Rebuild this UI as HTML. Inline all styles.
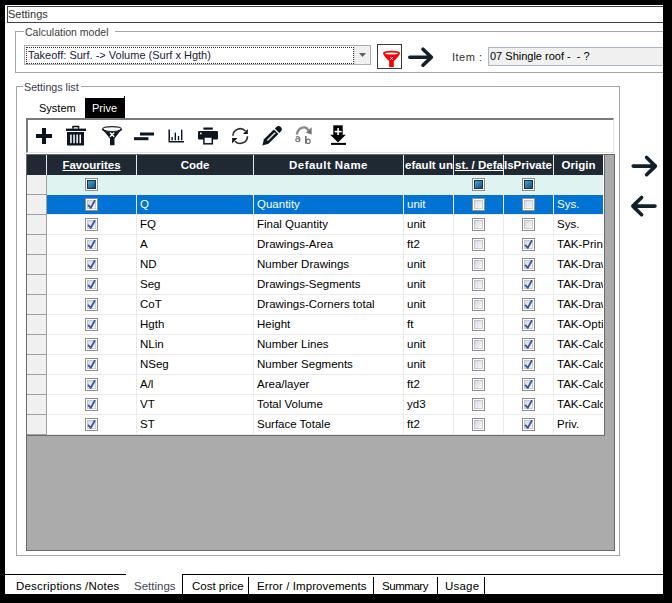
<!DOCTYPE html>
<html><head><meta charset="utf-8"><style>
*{margin:0;padding:0;box-sizing:border-box}
html,body{width:672px;height:603px;overflow:hidden;background:#000}
body{position:relative;font-family:"Liberation Sans", sans-serif;font-size:11px;color:#000}
.a{position:absolute}
.t{position:absolute;white-space:nowrap;line-height:13px;height:13px}
#panel{position:absolute;left:5px;top:5px;width:658px;height:589px;background:#fff;overflow:hidden}
.cb{position:absolute;width:13px;height:13px;border:1px solid #8e8e8e;background:#fff}
.cb i{position:absolute;left:1px;top:1px;width:9px;height:9px;background:linear-gradient(135deg,#d2d6de,#fbfbfb);box-shadow:inset 0 0 0 1px rgba(170,176,190,0.55)}
.cb svg{position:absolute;left:1px;top:0px}
.hd{position:absolute;top:150px;height:20px;color:#fff;font-weight:bold;font-size:11.5px;line-height:21px;text-align:center;overflow:hidden;white-space:nowrap}
.cell{position:absolute;height:19px;line-height:19px;overflow:hidden;white-space:nowrap;font-size:11.5px;padding-left:3px}
</style></head><body>
<div id="panel"><div class="a" style="left:2px;top:1px;width:700px;height:17px;border:1px solid #404040;"></div><div class="t" style="left:3px;top:3px;color:#333;font-size:11px;">Settings</div><div class="a" style="left:10px;top:26px;width:700px;height:42px;border:1px solid #a6a6a6;"></div><div class="a" style="left:19px;top:19px;width:91px;height:14px;background:#fff;"></div><div class="t" style="left:20px;top:21px;color:#404040;font-size:10.5px;">Calculation model</div><div class="a" style="left:19px;top:40px;width:347px;height:20px;border:1px solid #acacac;background:#fff;"></div><div class="a" style="left:21px;top:42px;width:328px;height:17px;border:1px dotted #333;"></div><div class="t" style="left:23px;top:44px;color:#1a1a40;font-size:11px;">Takeoff: Surf. -&gt; Volume (Surf x Hgth)</div><div class="a" style="left:349px;top:41px;width:16px;height:18px;background:#f0f0f0;border-left:1px solid #dcdcdc;"></div><svg class="a" style="left:354px;top:48px" width="7" height="4"><path d="M0 0H7L3.5 4Z" fill="#606060"/></svg><div class="a" style="left:372px;top:39px;width:25px;height:25px;border:1px solid #3a3a3a;background:#fff;"></div><svg class="a" style="left:-5px;top:-5px" width="672" height="603"><path d="M409.8 57.2 H431.4 M423 49.2 L431.4 57.2 L423 65.2" fill="none" stroke="#12202b" stroke-width="3.6" stroke-linecap="round" stroke-linejoin="round"/></svg><div class="t" style="left:447px;top:46px;color:#303030;font-size:11px;letter-spacing:0.5px;">Item :</div><div class="a" style="left:483px;top:42px;width:200px;height:19px;border:1px solid #a7b5c4;background:#f0f0f0;"></div><div class="t" style="left:485px;top:45px;color:#000;font-size:11px;white-space:pre;">07 Shingle roof -  - ?</div><div class="a" style="left:11px;top:81px;width:604px;height:470px;border:1px solid #a6a6a6;"></div><div class="a" style="left:18px;top:75px;width:58px;height:14px;background:#fff;"></div><div class="t" style="left:19px;top:76px;color:#3a3a50;font-size:10.7px;">Settings list</div><div class="t" style="left:34px;top:97px;color:#000;font-size:11px;">System</div><div class="a" style="left:80px;top:93px;width:40px;height:20px;background:#000;"></div><div class="a" style="left:119px;top:91px;width:1px;height:2px;background:#000;"></div><div class="t" style="left:87px;top:97px;color:#fff;font-size:11px;">Prive</div><div class="a" style="left:21px;top:113px;width:588px;height:35px;border-top:2px solid #7a7a7a;border-left:2px solid #7a7a7a;border-right:1px solid #e3e3e3;border-bottom:1px solid #e3e3e3;background:#fff;"></div><div class="a" style="left:21px;top:149px;width:589px;height:397px;background:#ababab;border:1px solid #6a6a6a;"></div><div class="a" style="left:22px;top:150px;width:576px;height:20px;background:#1f2833;"></div><div class="a" style="left:598px;top:150px;width:1px;height:280px;background:#fff;"></div><div class="a" style="left:599px;top:150px;width:1px;height:281px;background:#6a6a6a;"></div><div class="a" style="left:41px;top:150px;width:1px;height:20px;background:#e8e8e8;"></div><div class="a" style="left:131px;top:150px;width:1px;height:20px;background:#e8e8e8;"></div><div class="a" style="left:248px;top:150px;width:1px;height:20px;background:#e8e8e8;"></div><div class="a" style="left:398px;top:150px;width:1px;height:20px;background:#e8e8e8;"></div><div class="a" style="left:448px;top:150px;width:1px;height:20px;background:#e8e8e8;"></div><div class="a" style="left:498px;top:150px;width:1px;height:20px;background:#e8e8e8;"></div><div class="a" style="left:548px;top:150px;width:1px;height:20px;background:#e8e8e8;"></div><div class="hd" style="left:42px;width:89px;text-align:center;text-decoration:underline;">Favourites</div><div class="hd" style="left:132px;width:116px;text-align:center;">Code</div><div class="hd" style="left:249px;width:149px;text-align:center;letter-spacing:0.45px;">Default Name</div><div class="hd" style="left:399px;width:49px;text-align:left;padding-left:1px;">efault unit</div><div class="hd" style="left:449px;width:49px;text-align:left;text-decoration:underline;padding-left:1px;">st. / Default</div><div class="hd" style="left:499px;width:49px;text-align:left;padding-left:0px;">IsPrivate</div><div class="hd" style="left:549px;width:49px;text-align:center;">Origin</div><div class="a" style="left:22px;top:170px;width:19px;height:20px;background:#f0f0f0;border-bottom:1px solid #a0a0a0;"></div><div class="a" style="left:22px;top:190px;width:19px;height:20px;background:#f0f0f0;border-bottom:1px solid #a0a0a0;"></div><div class="a" style="left:22px;top:210px;width:19px;height:20px;background:#f0f0f0;border-bottom:1px solid #a0a0a0;"></div><div class="a" style="left:22px;top:230px;width:19px;height:20px;background:#f0f0f0;border-bottom:1px solid #a0a0a0;"></div><div class="a" style="left:22px;top:250px;width:19px;height:20px;background:#f0f0f0;border-bottom:1px solid #a0a0a0;"></div><div class="a" style="left:22px;top:270px;width:19px;height:20px;background:#f0f0f0;border-bottom:1px solid #a0a0a0;"></div><div class="a" style="left:22px;top:290px;width:19px;height:20px;background:#f0f0f0;border-bottom:1px solid #a0a0a0;"></div><div class="a" style="left:22px;top:310px;width:19px;height:20px;background:#f0f0f0;border-bottom:1px solid #a0a0a0;"></div><div class="a" style="left:22px;top:330px;width:19px;height:20px;background:#f0f0f0;border-bottom:1px solid #a0a0a0;"></div><div class="a" style="left:22px;top:350px;width:19px;height:20px;background:#f0f0f0;border-bottom:1px solid #a0a0a0;"></div><div class="a" style="left:22px;top:370px;width:19px;height:20px;background:#f0f0f0;border-bottom:1px solid #a0a0a0;"></div><div class="a" style="left:22px;top:390px;width:19px;height:20px;background:#f0f0f0;border-bottom:1px solid #a0a0a0;"></div><div class="a" style="left:22px;top:410px;width:19px;height:20px;background:#f0f0f0;border-bottom:1px solid #a0a0a0;"></div><div class="a" style="left:41px;top:170px;width:1px;height:260px;background:#a0a0a0;"></div><div class="a" style="left:42px;top:170px;width:556px;height:19px;background:#dff4f1;"></div><div class="a" style="left:42px;top:189px;width:556px;height:1px;background:#ebebeb;"></div><div class="cb" style="left:80px;top:173px"><b style="position:absolute;left:1px;top:1px;width:9px;height:9px;background:linear-gradient(135deg,#40a8d8,#154e80);border:1px solid #1c3350"></b></div><div class="cb" style="left:467px;top:173px"><b style="position:absolute;left:1px;top:1px;width:9px;height:9px;background:linear-gradient(135deg,#40a8d8,#154e80);border:1px solid #1c3350"></b></div><div class="cb" style="left:517px;top:173px"><b style="position:absolute;left:1px;top:1px;width:9px;height:9px;background:linear-gradient(135deg,#40a8d8,#154e80);border:1px solid #1c3350"></b></div><div class="a" style="left:42px;top:190px;width:556px;height:19px;background:#0073d5;"></div><div class="a" style="left:42px;top:209px;width:556px;height:1px;background:#ebebeb;"></div><div class="a" style="left:131px;top:190px;width:1px;height:20px;background:#ebebeb;"></div><div class="a" style="left:248px;top:190px;width:1px;height:20px;background:#ebebeb;"></div><div class="a" style="left:398px;top:190px;width:1px;height:20px;background:#ebebeb;"></div><div class="a" style="left:448px;top:190px;width:1px;height:20px;background:#ebebeb;"></div><div class="a" style="left:498px;top:190px;width:1px;height:20px;background:#ebebeb;"></div><div class="a" style="left:548px;top:190px;width:1px;height:20px;background:#ebebeb;"></div><div class="cb" style="left:80px;top:193px"><i></i><svg width="11" height="11" viewBox="0 0 11 11"><path d="M1.5 6.4 L3.8 8.9 L7.6 1.9" fill="none" stroke="#3a52a6" stroke-width="1.9" stroke-linecap="round" stroke-linejoin="round"/></svg></div><div class="cb" style="left:467px;top:193px"><i></i></div><div class="cb" style="left:517px;top:193px"><i></i></div><div class="cell" style="left:132px;top:190px;width:116px;color:#fff">Q</div><div class="cell" style="left:249px;top:190px;width:149px;color:#fff">Quantity</div><div class="cell" style="left:399px;top:190px;width:49px;color:#fff">unit</div><div class="cell" style="left:549px;top:190px;width:49px;color:#fff">Sys.</div><div class="a" style="left:42px;top:210px;width:556px;height:19px;background:#fff;"></div><div class="a" style="left:42px;top:229px;width:556px;height:1px;background:#ebebeb;"></div><div class="a" style="left:131px;top:210px;width:1px;height:20px;background:#ebebeb;"></div><div class="a" style="left:248px;top:210px;width:1px;height:20px;background:#ebebeb;"></div><div class="a" style="left:398px;top:210px;width:1px;height:20px;background:#ebebeb;"></div><div class="a" style="left:448px;top:210px;width:1px;height:20px;background:#ebebeb;"></div><div class="a" style="left:498px;top:210px;width:1px;height:20px;background:#ebebeb;"></div><div class="a" style="left:548px;top:210px;width:1px;height:20px;background:#ebebeb;"></div><div class="cb" style="left:80px;top:213px"><i></i><svg width="11" height="11" viewBox="0 0 11 11"><path d="M1.5 6.4 L3.8 8.9 L7.6 1.9" fill="none" stroke="#3a52a6" stroke-width="1.9" stroke-linecap="round" stroke-linejoin="round"/></svg></div><div class="cb" style="left:467px;top:213px"><i></i></div><div class="cb" style="left:517px;top:213px"><i></i></div><div class="cell" style="left:132px;top:210px;width:116px;color:#000">FQ</div><div class="cell" style="left:249px;top:210px;width:149px;color:#000">Final Quantity</div><div class="cell" style="left:399px;top:210px;width:49px;color:#000">unit</div><div class="cell" style="left:549px;top:210px;width:49px;color:#000">Sys.</div><div class="a" style="left:42px;top:230px;width:556px;height:19px;background:#fff;"></div><div class="a" style="left:42px;top:249px;width:556px;height:1px;background:#ebebeb;"></div><div class="a" style="left:131px;top:230px;width:1px;height:20px;background:#ebebeb;"></div><div class="a" style="left:248px;top:230px;width:1px;height:20px;background:#ebebeb;"></div><div class="a" style="left:398px;top:230px;width:1px;height:20px;background:#ebebeb;"></div><div class="a" style="left:448px;top:230px;width:1px;height:20px;background:#ebebeb;"></div><div class="a" style="left:498px;top:230px;width:1px;height:20px;background:#ebebeb;"></div><div class="a" style="left:548px;top:230px;width:1px;height:20px;background:#ebebeb;"></div><div class="cb" style="left:80px;top:233px"><i></i><svg width="11" height="11" viewBox="0 0 11 11"><path d="M1.5 6.4 L3.8 8.9 L7.6 1.9" fill="none" stroke="#3a52a6" stroke-width="1.9" stroke-linecap="round" stroke-linejoin="round"/></svg></div><div class="cb" style="left:467px;top:233px"><i></i></div><div class="cb" style="left:517px;top:233px"><i></i><svg width="11" height="11" viewBox="0 0 11 11"><path d="M1.5 6.4 L3.8 8.9 L7.6 1.9" fill="none" stroke="#3a52a6" stroke-width="1.9" stroke-linecap="round" stroke-linejoin="round"/></svg></div><div class="cell" style="left:132px;top:230px;width:116px;color:#000">A</div><div class="cell" style="left:249px;top:230px;width:149px;color:#000">Drawings-Area</div><div class="cell" style="left:399px;top:230px;width:49px;color:#000">ft2</div><div class="cell" style="left:549px;top:230px;width:49px;color:#000">TAK-Principal</div><div class="a" style="left:42px;top:250px;width:556px;height:19px;background:#fff;"></div><div class="a" style="left:42px;top:269px;width:556px;height:1px;background:#ebebeb;"></div><div class="a" style="left:131px;top:250px;width:1px;height:20px;background:#ebebeb;"></div><div class="a" style="left:248px;top:250px;width:1px;height:20px;background:#ebebeb;"></div><div class="a" style="left:398px;top:250px;width:1px;height:20px;background:#ebebeb;"></div><div class="a" style="left:448px;top:250px;width:1px;height:20px;background:#ebebeb;"></div><div class="a" style="left:498px;top:250px;width:1px;height:20px;background:#ebebeb;"></div><div class="a" style="left:548px;top:250px;width:1px;height:20px;background:#ebebeb;"></div><div class="cb" style="left:80px;top:253px"><i></i><svg width="11" height="11" viewBox="0 0 11 11"><path d="M1.5 6.4 L3.8 8.9 L7.6 1.9" fill="none" stroke="#3a52a6" stroke-width="1.9" stroke-linecap="round" stroke-linejoin="round"/></svg></div><div class="cb" style="left:467px;top:253px"><i></i></div><div class="cb" style="left:517px;top:253px"><i></i><svg width="11" height="11" viewBox="0 0 11 11"><path d="M1.5 6.4 L3.8 8.9 L7.6 1.9" fill="none" stroke="#3a52a6" stroke-width="1.9" stroke-linecap="round" stroke-linejoin="round"/></svg></div><div class="cell" style="left:132px;top:250px;width:116px;color:#000">ND</div><div class="cell" style="left:249px;top:250px;width:149px;color:#000">Number Drawings</div><div class="cell" style="left:399px;top:250px;width:49px;color:#000">unit</div><div class="cell" style="left:549px;top:250px;width:49px;color:#000">TAK-Drawings</div><div class="a" style="left:42px;top:270px;width:556px;height:19px;background:#fff;"></div><div class="a" style="left:42px;top:289px;width:556px;height:1px;background:#ebebeb;"></div><div class="a" style="left:131px;top:270px;width:1px;height:20px;background:#ebebeb;"></div><div class="a" style="left:248px;top:270px;width:1px;height:20px;background:#ebebeb;"></div><div class="a" style="left:398px;top:270px;width:1px;height:20px;background:#ebebeb;"></div><div class="a" style="left:448px;top:270px;width:1px;height:20px;background:#ebebeb;"></div><div class="a" style="left:498px;top:270px;width:1px;height:20px;background:#ebebeb;"></div><div class="a" style="left:548px;top:270px;width:1px;height:20px;background:#ebebeb;"></div><div class="cb" style="left:80px;top:273px"><i></i><svg width="11" height="11" viewBox="0 0 11 11"><path d="M1.5 6.4 L3.8 8.9 L7.6 1.9" fill="none" stroke="#3a52a6" stroke-width="1.9" stroke-linecap="round" stroke-linejoin="round"/></svg></div><div class="cb" style="left:467px;top:273px"><i></i></div><div class="cb" style="left:517px;top:273px"><i></i><svg width="11" height="11" viewBox="0 0 11 11"><path d="M1.5 6.4 L3.8 8.9 L7.6 1.9" fill="none" stroke="#3a52a6" stroke-width="1.9" stroke-linecap="round" stroke-linejoin="round"/></svg></div><div class="cell" style="left:132px;top:270px;width:116px;color:#000">Seg</div><div class="cell" style="left:249px;top:270px;width:149px;color:#000">Drawings-Segments</div><div class="cell" style="left:399px;top:270px;width:49px;color:#000">unit</div><div class="cell" style="left:549px;top:270px;width:49px;color:#000">TAK-Drawings</div><div class="a" style="left:42px;top:290px;width:556px;height:19px;background:#fff;"></div><div class="a" style="left:42px;top:309px;width:556px;height:1px;background:#ebebeb;"></div><div class="a" style="left:131px;top:290px;width:1px;height:20px;background:#ebebeb;"></div><div class="a" style="left:248px;top:290px;width:1px;height:20px;background:#ebebeb;"></div><div class="a" style="left:398px;top:290px;width:1px;height:20px;background:#ebebeb;"></div><div class="a" style="left:448px;top:290px;width:1px;height:20px;background:#ebebeb;"></div><div class="a" style="left:498px;top:290px;width:1px;height:20px;background:#ebebeb;"></div><div class="a" style="left:548px;top:290px;width:1px;height:20px;background:#ebebeb;"></div><div class="cb" style="left:80px;top:293px"><i></i><svg width="11" height="11" viewBox="0 0 11 11"><path d="M1.5 6.4 L3.8 8.9 L7.6 1.9" fill="none" stroke="#3a52a6" stroke-width="1.9" stroke-linecap="round" stroke-linejoin="round"/></svg></div><div class="cb" style="left:467px;top:293px"><i></i></div><div class="cb" style="left:517px;top:293px"><i></i><svg width="11" height="11" viewBox="0 0 11 11"><path d="M1.5 6.4 L3.8 8.9 L7.6 1.9" fill="none" stroke="#3a52a6" stroke-width="1.9" stroke-linecap="round" stroke-linejoin="round"/></svg></div><div class="cell" style="left:132px;top:290px;width:116px;color:#000">CoT</div><div class="cell" style="left:249px;top:290px;width:149px;color:#000">Drawings-Corners total</div><div class="cell" style="left:399px;top:290px;width:49px;color:#000">unit</div><div class="cell" style="left:549px;top:290px;width:49px;color:#000">TAK-Drawings</div><div class="a" style="left:42px;top:310px;width:556px;height:19px;background:#fff;"></div><div class="a" style="left:42px;top:329px;width:556px;height:1px;background:#ebebeb;"></div><div class="a" style="left:131px;top:310px;width:1px;height:20px;background:#ebebeb;"></div><div class="a" style="left:248px;top:310px;width:1px;height:20px;background:#ebebeb;"></div><div class="a" style="left:398px;top:310px;width:1px;height:20px;background:#ebebeb;"></div><div class="a" style="left:448px;top:310px;width:1px;height:20px;background:#ebebeb;"></div><div class="a" style="left:498px;top:310px;width:1px;height:20px;background:#ebebeb;"></div><div class="a" style="left:548px;top:310px;width:1px;height:20px;background:#ebebeb;"></div><div class="cb" style="left:80px;top:313px"><i></i><svg width="11" height="11" viewBox="0 0 11 11"><path d="M1.5 6.4 L3.8 8.9 L7.6 1.9" fill="none" stroke="#3a52a6" stroke-width="1.9" stroke-linecap="round" stroke-linejoin="round"/></svg></div><div class="cb" style="left:467px;top:313px"><i></i></div><div class="cb" style="left:517px;top:313px"><i></i><svg width="11" height="11" viewBox="0 0 11 11"><path d="M1.5 6.4 L3.8 8.9 L7.6 1.9" fill="none" stroke="#3a52a6" stroke-width="1.9" stroke-linecap="round" stroke-linejoin="round"/></svg></div><div class="cell" style="left:132px;top:310px;width:116px;color:#000">Hgth</div><div class="cell" style="left:249px;top:310px;width:149px;color:#000">Height</div><div class="cell" style="left:399px;top:310px;width:49px;color:#000">ft</div><div class="cell" style="left:549px;top:310px;width:49px;color:#000">TAK-Options</div><div class="a" style="left:42px;top:330px;width:556px;height:19px;background:#fff;"></div><div class="a" style="left:42px;top:349px;width:556px;height:1px;background:#ebebeb;"></div><div class="a" style="left:131px;top:330px;width:1px;height:20px;background:#ebebeb;"></div><div class="a" style="left:248px;top:330px;width:1px;height:20px;background:#ebebeb;"></div><div class="a" style="left:398px;top:330px;width:1px;height:20px;background:#ebebeb;"></div><div class="a" style="left:448px;top:330px;width:1px;height:20px;background:#ebebeb;"></div><div class="a" style="left:498px;top:330px;width:1px;height:20px;background:#ebebeb;"></div><div class="a" style="left:548px;top:330px;width:1px;height:20px;background:#ebebeb;"></div><div class="cb" style="left:80px;top:333px"><i></i><svg width="11" height="11" viewBox="0 0 11 11"><path d="M1.5 6.4 L3.8 8.9 L7.6 1.9" fill="none" stroke="#3a52a6" stroke-width="1.9" stroke-linecap="round" stroke-linejoin="round"/></svg></div><div class="cb" style="left:467px;top:333px"><i></i></div><div class="cb" style="left:517px;top:333px"><i></i><svg width="11" height="11" viewBox="0 0 11 11"><path d="M1.5 6.4 L3.8 8.9 L7.6 1.9" fill="none" stroke="#3a52a6" stroke-width="1.9" stroke-linecap="round" stroke-linejoin="round"/></svg></div><div class="cell" style="left:132px;top:330px;width:116px;color:#000">NLin</div><div class="cell" style="left:249px;top:330px;width:149px;color:#000">Number Lines</div><div class="cell" style="left:399px;top:330px;width:49px;color:#000">unit</div><div class="cell" style="left:549px;top:330px;width:49px;color:#000">TAK-Calc</div><div class="a" style="left:42px;top:350px;width:556px;height:19px;background:#fff;"></div><div class="a" style="left:42px;top:369px;width:556px;height:1px;background:#ebebeb;"></div><div class="a" style="left:131px;top:350px;width:1px;height:20px;background:#ebebeb;"></div><div class="a" style="left:248px;top:350px;width:1px;height:20px;background:#ebebeb;"></div><div class="a" style="left:398px;top:350px;width:1px;height:20px;background:#ebebeb;"></div><div class="a" style="left:448px;top:350px;width:1px;height:20px;background:#ebebeb;"></div><div class="a" style="left:498px;top:350px;width:1px;height:20px;background:#ebebeb;"></div><div class="a" style="left:548px;top:350px;width:1px;height:20px;background:#ebebeb;"></div><div class="cb" style="left:80px;top:353px"><i></i><svg width="11" height="11" viewBox="0 0 11 11"><path d="M1.5 6.4 L3.8 8.9 L7.6 1.9" fill="none" stroke="#3a52a6" stroke-width="1.9" stroke-linecap="round" stroke-linejoin="round"/></svg></div><div class="cb" style="left:467px;top:353px"><i></i></div><div class="cb" style="left:517px;top:353px"><i></i><svg width="11" height="11" viewBox="0 0 11 11"><path d="M1.5 6.4 L3.8 8.9 L7.6 1.9" fill="none" stroke="#3a52a6" stroke-width="1.9" stroke-linecap="round" stroke-linejoin="round"/></svg></div><div class="cell" style="left:132px;top:350px;width:116px;color:#000">NSeg</div><div class="cell" style="left:249px;top:350px;width:149px;color:#000">Number Segments</div><div class="cell" style="left:399px;top:350px;width:49px;color:#000">unit</div><div class="cell" style="left:549px;top:350px;width:49px;color:#000">TAK-Calc</div><div class="a" style="left:42px;top:370px;width:556px;height:19px;background:#fff;"></div><div class="a" style="left:42px;top:389px;width:556px;height:1px;background:#ebebeb;"></div><div class="a" style="left:131px;top:370px;width:1px;height:20px;background:#ebebeb;"></div><div class="a" style="left:248px;top:370px;width:1px;height:20px;background:#ebebeb;"></div><div class="a" style="left:398px;top:370px;width:1px;height:20px;background:#ebebeb;"></div><div class="a" style="left:448px;top:370px;width:1px;height:20px;background:#ebebeb;"></div><div class="a" style="left:498px;top:370px;width:1px;height:20px;background:#ebebeb;"></div><div class="a" style="left:548px;top:370px;width:1px;height:20px;background:#ebebeb;"></div><div class="cb" style="left:80px;top:373px"><i></i><svg width="11" height="11" viewBox="0 0 11 11"><path d="M1.5 6.4 L3.8 8.9 L7.6 1.9" fill="none" stroke="#3a52a6" stroke-width="1.9" stroke-linecap="round" stroke-linejoin="round"/></svg></div><div class="cb" style="left:467px;top:373px"><i></i></div><div class="cb" style="left:517px;top:373px"><i></i><svg width="11" height="11" viewBox="0 0 11 11"><path d="M1.5 6.4 L3.8 8.9 L7.6 1.9" fill="none" stroke="#3a52a6" stroke-width="1.9" stroke-linecap="round" stroke-linejoin="round"/></svg></div><div class="cell" style="left:132px;top:370px;width:116px;color:#000">A/l</div><div class="cell" style="left:249px;top:370px;width:149px;color:#000">Area/layer</div><div class="cell" style="left:399px;top:370px;width:49px;color:#000">ft2</div><div class="cell" style="left:549px;top:370px;width:49px;color:#000">TAK-Calc</div><div class="a" style="left:42px;top:390px;width:556px;height:19px;background:#fff;"></div><div class="a" style="left:42px;top:409px;width:556px;height:1px;background:#ebebeb;"></div><div class="a" style="left:131px;top:390px;width:1px;height:20px;background:#ebebeb;"></div><div class="a" style="left:248px;top:390px;width:1px;height:20px;background:#ebebeb;"></div><div class="a" style="left:398px;top:390px;width:1px;height:20px;background:#ebebeb;"></div><div class="a" style="left:448px;top:390px;width:1px;height:20px;background:#ebebeb;"></div><div class="a" style="left:498px;top:390px;width:1px;height:20px;background:#ebebeb;"></div><div class="a" style="left:548px;top:390px;width:1px;height:20px;background:#ebebeb;"></div><div class="cb" style="left:80px;top:393px"><i></i><svg width="11" height="11" viewBox="0 0 11 11"><path d="M1.5 6.4 L3.8 8.9 L7.6 1.9" fill="none" stroke="#3a52a6" stroke-width="1.9" stroke-linecap="round" stroke-linejoin="round"/></svg></div><div class="cb" style="left:467px;top:393px"><i></i></div><div class="cb" style="left:517px;top:393px"><i></i><svg width="11" height="11" viewBox="0 0 11 11"><path d="M1.5 6.4 L3.8 8.9 L7.6 1.9" fill="none" stroke="#3a52a6" stroke-width="1.9" stroke-linecap="round" stroke-linejoin="round"/></svg></div><div class="cell" style="left:132px;top:390px;width:116px;color:#000">VT</div><div class="cell" style="left:249px;top:390px;width:149px;color:#000">Total Volume</div><div class="cell" style="left:399px;top:390px;width:49px;color:#000">yd3</div><div class="cell" style="left:549px;top:390px;width:49px;color:#000">TAK-Calc</div><div class="a" style="left:42px;top:410px;width:556px;height:19px;background:#fff;"></div><div class="a" style="left:42px;top:429px;width:556px;height:1px;background:#ebebeb;"></div><div class="a" style="left:131px;top:410px;width:1px;height:20px;background:#ebebeb;"></div><div class="a" style="left:248px;top:410px;width:1px;height:20px;background:#ebebeb;"></div><div class="a" style="left:398px;top:410px;width:1px;height:20px;background:#ebebeb;"></div><div class="a" style="left:448px;top:410px;width:1px;height:20px;background:#ebebeb;"></div><div class="a" style="left:498px;top:410px;width:1px;height:20px;background:#ebebeb;"></div><div class="a" style="left:548px;top:410px;width:1px;height:20px;background:#ebebeb;"></div><div class="cb" style="left:80px;top:413px"><i></i><svg width="11" height="11" viewBox="0 0 11 11"><path d="M1.5 6.4 L3.8 8.9 L7.6 1.9" fill="none" stroke="#3a52a6" stroke-width="1.9" stroke-linecap="round" stroke-linejoin="round"/></svg></div><div class="cb" style="left:467px;top:413px"><i></i></div><div class="cb" style="left:517px;top:413px"><i></i><svg width="11" height="11" viewBox="0 0 11 11"><path d="M1.5 6.4 L3.8 8.9 L7.6 1.9" fill="none" stroke="#3a52a6" stroke-width="1.9" stroke-linecap="round" stroke-linejoin="round"/></svg></div><div class="cell" style="left:132px;top:410px;width:116px;color:#000">ST</div><div class="cell" style="left:249px;top:410px;width:149px;color:#000">Surface Totale</div><div class="cell" style="left:399px;top:410px;width:49px;color:#000">ft2</div><div class="cell" style="left:549px;top:410px;width:49px;color:#000">Priv.</div><div class="a" style="left:22px;top:430px;width:578px;height:1px;background:#6a6a6a;"></div><svg class="a" style="left:-5px;top:-5px" width="672" height="603"><path d="M633.2 166.1 H655.4 M646.6 157.5 L655.4 166.1 L646.6 174.7" fill="none" stroke="#12202b" stroke-width="3.6" stroke-linecap="round" stroke-linejoin="round"/></svg><svg class="a" style="left:-5px;top:-5px" width="672" height="603"><path d="M655 206.1 H632.8 M641.6 197.5 L632.8 206.1 L641.6 214.7" fill="none" stroke="#12202b" stroke-width="3.6" stroke-linecap="round" stroke-linejoin="round"/></svg><div class="a" style="left:0px;top:569px;width:121px;height:1px;background:#000;"></div><div class="a" style="left:177px;top:569px;width:500px;height:1px;background:#000;"></div><div class="a" style="left:177px;top:569px;width:1px;height:20px;background:#000;"></div><div class="a" style="left:243px;top:572px;width:1px;height:17px;background:#000;"></div><div class="a" style="left:368px;top:572px;width:1px;height:17px;background:#000;"></div><div class="a" style="left:432px;top:572px;width:1px;height:17px;background:#000;"></div><div class="a" style="left:479px;top:572px;width:1px;height:17px;background:#000;"></div><div class="t" style="left:11px;top:575px;color:#000;font-size:11.5px;letter-spacing:0.2px;">Descriptions /Notes</div><div class="t" style="left:129px;top:575px;color:#454555;font-size:11.5px;letter-spacing:0px;">Settings</div><div class="t" style="left:187px;top:575px;color:#000;font-size:11.5px;letter-spacing:0px;">Cost price</div><div class="t" style="left:252px;top:575px;color:#000;font-size:11.5px;letter-spacing:0.08px;">Error / Improvements</div><div class="t" style="left:377px;top:575px;color:#000;font-size:11.5px;letter-spacing:-0.45px;">Summary</div><div class="t" style="left:440px;top:575px;color:#000;font-size:11.5px;letter-spacing:0.2px;">Usage</div></div><!--toolbar icons-->
<svg class="a" style="left:0;top:0" width="672" height="603" viewBox="0 0 672 603">
<!-- red funnel -->
<path d="M383 53.2 Q384.2 56.8 389.2 61 V67 H393.8 V61 Q398.8 56.8 400 53.2Z" fill="#f00"/>
<ellipse cx="391.5" cy="53" rx="8.5" ry="2.3" fill="#f00"/>
<ellipse cx="391.5" cy="53.5" rx="6.5" ry="1.1" fill="#f2fafa"/>
<path d="M390.2 57 L393 59.8 M393 57 L390.2 59.8" stroke="#fff" stroke-width="0.8"/>
<!-- plus -->
<rect x="36" y="134" width="16" height="4" fill="#0b1620"/>
<rect x="42" y="128" width="4" height="16" fill="#0b1620"/>
<!-- trash -->
<rect x="66" y="128.6" width="20" height="2.4" fill="#0b1620"/>
<path d="M72.2 128.8 V126.6 Q72.2 125.8 73 125.8 H78.5 Q79.3 125.8 79.3 126.6 V128.8 H77.8 V127.2 H73.7 V128.8Z" fill="#0b1620"/>
<path d="M67 132 H84 V144.4 Q84 145.6 82.8 145.6 H68.2 Q67 145.6 67 144.4Z" fill="#0b1620"/>
<rect x="70.2" y="134.6" width="1.5" height="8.6" fill="#fff"/>
<rect x="73.3" y="134.6" width="1.5" height="8.6" fill="#fff"/>
<rect x="76.4" y="134.6" width="1.5" height="8.6" fill="#fff"/>
<rect x="79.5" y="134.6" width="1.5" height="8.6" fill="#fff"/>
<!-- funnel with x -->
<path d="M102.4 129.2 A9.6 2.6 0 0 0 121.6 129.2 L114.5 138.6 V145.3 H110 V138.6Z" fill="#0b1620"/>
<ellipse cx="112" cy="129.1" rx="9.4" ry="2.5" fill="none" stroke="#2a2a2a" stroke-width="1.1"/>
<path d="M102.4 129.2 Q103.4 130.8 106 131.2 M121.6 129.2 Q120.6 130.8 118 131.2" stroke="#0b1620" stroke-width="1.6" fill="none"/>
<path d="M110 132.6 L114.2 136.8 M114.2 132.6 L110 136.8" stroke="#fff" stroke-width="1.4"/>
<!-- bars -->
<rect x="140" y="132.5" width="14" height="3" fill="#0b1620"/>
<rect x="134" y="137.2" width="14.4" height="3" fill="#0b1620"/>
<!-- chart -->
<path d="M169.2 129.4 V141.7 H184" fill="none" stroke="#0b1620" stroke-width="1.5"/>
<rect x="171.4" y="137" width="1.4" height="3.3" fill="#0b1620"/>
<rect x="174.6" y="132.6" width="1.4" height="7.7" fill="#0b1620"/>
<rect x="177.8" y="136" width="1.4" height="4.3" fill="#0b1620"/>
<rect x="181" y="129.7" width="1.4" height="10.6" fill="#0b1620"/>
<!-- printer -->
<rect x="203.4" y="127.5" width="9.4" height="2.2" fill="#0b1620"/>
<path d="M199.2 131 H216.8 Q218 131 218 132.2 V138.5 Q218 139.6 216.8 139.6 H199.2 Q198 139.6 198 138.5 V132.2 Q198 131 199.2 131Z" fill="#0b1620"/>
<circle cx="200.8" cy="133.4" r="0.9" fill="#fff"/>
<rect x="203.9" y="137" width="8.4" height="6.8" fill="#fff" stroke="#0b1620" stroke-width="1.5"/>
<!-- sync -->
<path d="M232.9 135.8 A7.3 7.3 0 0 1 245.4 130.9" fill="none" stroke="#2e2e2e" stroke-width="1.6"/>
<path d="M247.8 129.1 V133.9 H243Z" fill="#0b1620"/>
<path d="M247.5 136.2 A7.3 7.3 0 0 1 235 141.2" fill="none" stroke="#2e2e2e" stroke-width="1.6"/>
<path d="M232.1 143.6 V138.1 H237.5Z" fill="#0b1620"/>
<!-- pencil -->
<g transform="translate(262.4 145.4) rotate(-45)">
<path d="M0 0 L5.4 -3.2 H19.4 V3.2 H5.4Z" fill="#0b1620"/>
<rect x="7" y="-0.75" width="11" height="1.5" fill="#e4e4e4"/>
<path d="M20.7 -3.1 H22.9 A3.1 3.1 0 0 1 22.9 3.1 H20.7Z" fill="#0b1620"/>
</g>
<!-- ab replace (disabled) -->
<path d="M296.8 134.4 Q298.4 127.2 304.4 127.4 Q307 127.6 308.4 130.4" fill="none" stroke="#8a8a8a" stroke-width="2.4"/>
<path d="M311.6 127.2 L311.6 134.4 L306 132.8Z" fill="#707070"/>
<ellipse cx="297.6" cy="140.1" rx="1.9" ry="1.5" fill="none" stroke="#777" stroke-width="1.2"/>
<path d="M299.7 137.8 V141.8 M295.9 137.3 Q297.6 135.6 299.7 137.6" fill="none" stroke="#777" stroke-width="1.2"/>
<path d="M305.8 136 V143.8" stroke="#707070" stroke-width="1.6"/>
<ellipse cx="308.3" cy="141.3" rx="1.9" ry="2.2" fill="none" stroke="#777" stroke-width="1.2"/>
<!-- import -->
<rect x="333.3" y="125.3" width="9.4" height="10" fill="#000"/>
<path d="M330.2 134.8 H345.8 L338 142.4Z" fill="#000"/>
<rect x="331" y="142.9" width="15" height="2" fill="#000"/>
<rect x="334.6" y="130.8" width="7" height="1.6" fill="#fff"/>
<rect x="337.3" y="128" width="1.6" height="7" fill="#fff"/>
</svg>

</body></html>
